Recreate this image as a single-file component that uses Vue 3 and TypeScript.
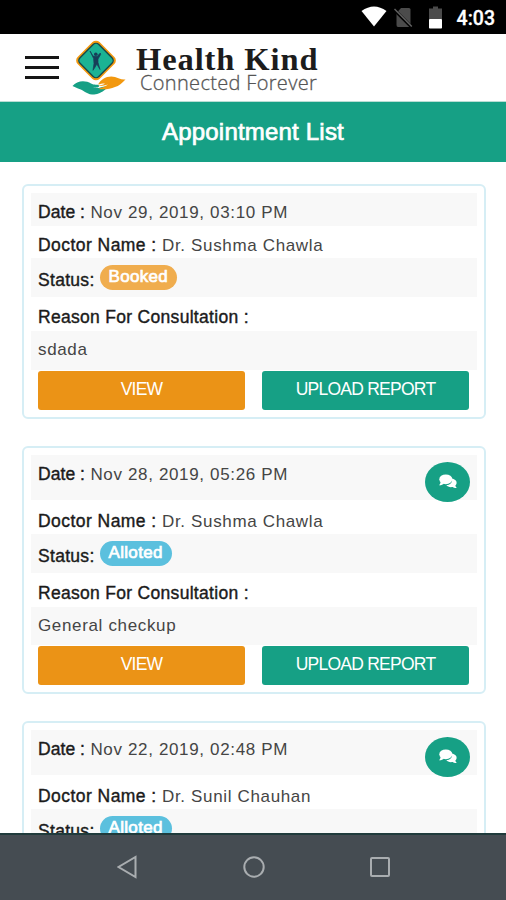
<script setup lang="ts">
interface Appointment {
  date: string
  doctor: string
  status: 'Booked' | 'Alloted'
  reason: string
  chat: boolean
}

const appointments: Appointment[] = [
  { date: 'Nov 29, 2019, 03:10 PM', doctor: 'Dr. Sushma Chawla', status: 'Booked', reason: 'sdada', chat: false },
  { date: 'Nov 28, 2019, 05:26 PM', doctor: 'Dr. Sushma Chawla', status: 'Alloted', reason: 'General checkup', chat: true },
  { date: 'Nov 22, 2019, 02:48 PM', doctor: 'Dr. Sunil Chauhan', status: 'Alloted', reason: '', chat: true },
]
</script>

<template>
  <div class="screen">
    <div class="statusbar">
      <svg class="wifi" width="26" height="21" viewBox="0 0 26 21">
        <path d="M0.5 5 Q13 -4 25.500 5 L13 20.500 Z" fill="#fff" />
      </svg>
      <svg class="sim" width="19" height="21" viewBox="0 0 19 21">
        <path d="M7 1 H15 Q16.500 1 16.500 2.500 V18 Q16.500 20 15 20 H4 Q2.500 20 2.500 18 V6 Z" fill="#4b4b4b" />
        <path d="M0.500 3 L18 20.500" stroke="#000" stroke-width="3.200" />
        <path d="M0.500 2 L17.800 19.500" stroke="#626262" stroke-width="1.500" />
      </svg>
      <svg class="battery" width="13" height="23" viewBox="0 0 13 23">
        <path d="M4 0.500 H9 V2.500 H13 V13 H0 V2.500 H4 Z" fill="#4b4b4b" />
        <rect y="13" width="13" height="9.500" rx="0.800" fill="#fff" />
      </svg>
      <span class="clock">4:03</span>
    </div>

    <header class="header">
      <div class="menu"><i /><i /><i /></div>
      <svg class="logo" width="56" height="56" viewBox="0 0 56 56">
        <rect x="8.500" y="5" width="31" height="31" rx="5" transform="rotate(45 24 20.500)" fill="#f2980f" />
        <rect x="10.700" y="7.200" width="26.600" height="26.600" rx="4" transform="rotate(45 24 20.500)" fill="#1bb394" stroke="#17484a" stroke-width="1.400" />
        <circle cx="23.800" cy="14.300" r="1.800" fill="#173d58" />
        <path d="M18 11 L21 16.100 L25 16.500 L28.300 13 L28.600 14.500 L26 19.100 L26 22.500 L28 29.500 L24.800 24 L23.500 26.500 L21 30.300 L22 23.500 L21.600 18.500 Z" fill="#173d58" stroke="#173d58" stroke-width="0.700" />
        <path d="M0.500 46 C5 40 14 40 19 43.500 C22 45.500 26 44 27 45.500 C28 47.500 24 48 20 47.500 C27 49.500 30 46 34 46.500 C37 48 28 55 20 54.500 C14 54 12 50 6 48.500 Z" fill="#16a085" />
        <path d="M26 44.500 C29 39 36 35 43 37 C46 38 49 40 53.500 39.500 C50 43 47 46 43 47 C38 49.500 31 49.500 26.500 49 C29 47.500 33 47 36 44.500 C32 46 29 46 26 46 C28 45 31 45 33 43.500 C30 43.500 28 44 26 44.500 Z" fill="#f2980f" />
      </svg>
      <div class="brand">
        <div class="brand-name">Health Kind</div>
        <div class="brand-tag">Connected Forever</div>
      </div>
    </header>

    <h1 class="title">Appointment List</h1>

    <main class="list">
      <article v-for="item in appointments" :key="item.date" class="card" :class="{ tall: item.chat }">
        <div class="row date shaded">
          <p><span class="label">Date :</span> <span>{{ item.date }}</span></p>
          <button v-if="item.chat" class="chat">
            <svg width="18" height="15" viewBox="0 0 18 15">
              <path d="M12.800 4.500 C16 5 18 7 17.600 9.200 C17.500 10.200 17 11 16.300 11.700 C16.600 12.700 17.300 13.300 17.800 14 C16 14.200 14.800 13.700 13.700 13 C11 13.500 8.500 12.800 7.300 11.300 C11 11 14 8.500 12.800 4.500 Z" fill="#fff" />
              <ellipse cx="6.800" cy="5.300" rx="6.500" ry="4.900" fill="#fff" />
              <path d="M1.700 7 C1.700 9 1 10.300 0 11.300 C2 11.500 3.700 10.800 5 9.500 Z" fill="#fff" />
            </svg>
          </button>
        </div>
        <div class="row doctor"><p><span class="label">Doctor Name :</span> <span>{{ item.doctor }}</span></p></div>
        <div class="row status shaded">
          <span class="label">Status:</span>
          <span class="badge" :class="item.status.toLowerCase()">{{ item.status }}</span>
        </div>
        <template v-if="item.reason">
          <div class="row heading"><span class="label">Reason For Consultation :</span></div>
          <div class="row reason shaded">{{ item.reason }}</div>
          <div class="actions">
            <button class="btn view">VIEW</button>
            <button class="btn upload">UPLOAD REPORT</button>
          </div>
        </template>
      </article>
    </main>

    <nav class="navbar">
      <svg width="20" height="24" viewBox="0 0 20 24"><path d="M18.500 2 V22 L1.500 12 Z" /></svg>
      <svg width="24" height="24" viewBox="0 0 24 24"><circle cx="12" cy="12" r="9.700" /></svg>
      <svg width="20" height="24" viewBox="0 0 20 24"><rect x="1" y="3" width="18" height="18" rx="1" /></svg>
    </nav>
  </div>
</template>

<style>
body {
  margin: 0;
  overflow: hidden;
}
</style>

<style scoped>
.screen {
  display: flex;
  flex-direction: column;
  width: 506px;
  height: 900px;
  overflow: hidden;
  background: #fff;
  color: #454545;
  font: 17px/20px "Liberation Sans", Arial, sans-serif;
}
p { margin: 0; }
button { border: 0; padding: 0; font: inherit; color: #fff; }
.statusbar {
  flex: none;
  box-sizing: border-box;
  height: 34px;
  padding-right: 11px;
  background: #000;
  color: #fff;
  display: flex;
  justify-content: flex-end;
  align-items: flex-start;
}
.wifi { margin: 6px 7px 0 0; }
.sim { margin: 7px 16px 0 0; }
.battery { margin: 6px 15px 0 0; }
.clock { font: 500 19.500px/37px Roboto, sans-serif; -webkit-text-stroke: 0.3px #fff; }
.header {
  flex: none;
  box-sizing: border-box;
  height: 68px;
  padding-left: 25px;
  display: flex;
  align-items: flex-start;
  border-bottom: 1px solid #b9ddd4;
}
.menu {
  display: flex;
  flex-direction: column;
  gap: 7px;
  margin-top: 22px;
}
.menu i { width: 34px; height: 3px; background: #151515; }
.logo { margin: 6px 0 0 13px; }
.brand { padding: 7px 0 0 8px; }
.brand-name {
  font: bold 32.5px/36px "Liberation Serif", serif;
  letter-spacing: 0.9px;
  color: #1c1c1c;
  white-space: nowrap;
}
.brand-tag {
  font: 300 20px/24px "Open Sans", sans-serif;
  letter-spacing: 0.33px;
  color: #555;
  -webkit-text-stroke: 0.3px #555;
  margin: -6px 0 0 4px;
  white-space: nowrap;
}
.title {
  flex: none;
  margin: 0;
  height: 60px;
  background: #16a085;
  color: #fff;
  font-size: 24px;
  font-weight: 400;
  line-height: 60px;
  letter-spacing: 0.2px;
  text-align: center;
  -webkit-text-stroke: 0.7px #fff;
}
.list {
  flex: 1;
  min-height: 0;
  overflow: hidden;
  display: flex;
  flex-direction: column;
  gap: 27px;
  padding: 22px 20px 0 22px;
}
.card {
  flex: none;
  box-sizing: border-box;
  height: 235px;
  border: 2px solid #d6eef5;
  border-radius: 6px;
  padding: 7px 7px 0;
}
.card.tall { height: 248px; }
.row {
  box-sizing: border-box;
  padding: 0 7px;
  letter-spacing: 0.65px;
  white-space: nowrap;
}
.shaded { background: #f8f8f8; }
.label {
  color: #1b1b1b;
  font-size: 17.5px;
  letter-spacing: 0.3px;
  -webkit-text-stroke: 0.4px #1b1b1b;
}
.date { display: flex; justify-content: space-between; height: 33px; padding-top: 9px; }
.date .label { letter-spacing: 0.05px; }
.doctor .label { letter-spacing: 0.45px; }
.tall .date { height: 45px; padding-top: 9px; }
.doctor { height: 32px; padding-top: 9px; }
.tall .doctor { height: 34px; padding-top: 11px; }
.status { display: flex; align-items: flex-start; gap: 5px; height: 39px; padding-top: 12px; }
.badge {
  box-sizing: border-box;
  height: 25px;
  margin-top: -5px;
  padding: 0 9px;
  border-radius: 13px;
  color: #fff;
  line-height: 24px;
  letter-spacing: 0.3px;
  -webkit-text-stroke: 0.7px #fff;
}
.booked { background: #f0ad4e; }
.alloted { background: #5bc0de; }
.heading { height: 34px; padding-top: 10px; }
.reason { height: 39px; padding-top: 9px; }
.tall .reason { height: 38px; }
.actions { display: flex; gap: 17px; padding: 1px 8px 0 7px; }
.btn {
  flex: 1;
  height: 39px;
  border-radius: 3px;
  font-size: 17.5px;
  letter-spacing: -0.75px;
  line-height: 37px;
  padding-bottom: 2px;
}
.view { background: #eb9316; }
.upload { background: #16a085; }
.chat {
  flex: none;
  display: flex;
  align-items: center;
  justify-content: center;
  width: 45px;
  height: 40px;
  margin-top: -2px;
  padding-bottom: 2px;
  border-radius: 50%;
  background: #16a085;
}
.navbar {
  flex: none;
  box-sizing: border-box;
  height: 67px;
  padding: 0 116px 2px 117px;
  border-top: 2px solid #203b3c;
  background: #454c52;
  display: flex;
  align-items: center;
  justify-content: space-between;
}
.navbar svg { fill: none; stroke: #a9adb0; stroke-width: 2; }
</style>
